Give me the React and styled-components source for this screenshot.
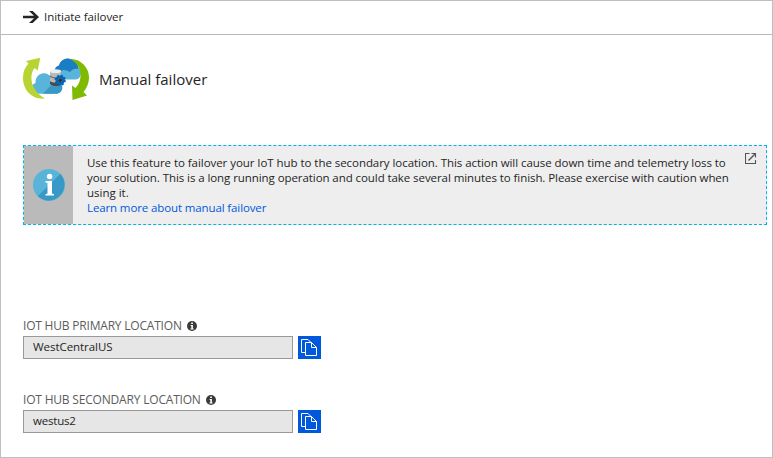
import React from "react";
import styled, { createGlobalStyle } from "styled-components";

const GlobalStyle = createGlobalStyle`
  * { box-sizing: border-box; }
  body { margin: 0; background: #fff; }
`;

const Blade = styled.main`
  display: flex;
  flex-direction: column;
  width: 773px;
  height: 458px;
  overflow: hidden;
  border: 1px solid #bfbfbf;
  background: #fff;
  color: #252525;
  font: 11.5px/15px "Open Sans", "Noto Sans", sans-serif;
  white-space: nowrap;
`;

const Toolbar = styled.header`
  display: flex;
  flex: none;
  height: 34px;
  padding-left: 22px;
  border-bottom: 1px solid #b9b9b9;
`;

const Command = styled.button`
  display: flex;
  align-items: center;
  gap: 5px;
  padding: 0 0 2px;
  border: 0;
  background: none;
  color: inherit;
  font: inherit;
  letter-spacing: ${(p) => p.$tracking};
`;

const Content = styled.div`
  display: flex;
  flex-direction: column;
  padding: 20px 5px 0 22px;
`;

const TitleRow = styled.div`
  display: flex;
  align-items: center;
  gap: 8px;
  height: 50px;
`;

const Title = styled.h1`
  margin: 0 0 2px;
  font-size: 15px;
  line-height: 20px;
  font-weight: 400;
  letter-spacing: ${(p) => p.$tracking};
`;

const Notice = styled.section`
  display: flex;
  height: 80px;
  margin-top: 40px;
  border: 1px dashed #00b4f0;
  background: #eee;
`;

const NoticeIcon = styled.div`
  display: flex;
  flex: none;
  align-items: center;
  justify-content: center;
  width: 49px;
  background: #bababa;
`;

const NoticeBody = styled.div`
  display: flex;
  flex: 1;
  min-width: 0;
  flex-direction: column;
  align-items: flex-start;
  padding: 9px 0 0 14px;
`;

const Line = styled.span`
  letter-spacing: ${(p) => p.$tracking};
`;

const Link = styled.a`
  color: #0058dc;
  text-decoration: none;
  letter-spacing: ${(p) => p.$tracking};
`;

const OpenButton = styled.span`
  display: flex;
  flex: none;
  width: 12px;
  height: 12px;
  margin: 7px 9px 0 0;
`;

const Fields = styled.div`
  display: flex;
  flex-direction: column;
  gap: 32px;
  margin-top: 92px;
`;

const Field = styled.div`
  display: flex;
  flex-direction: column;
  gap: 3px;
`;

const Label = styled.label`
  display: flex;
  align-items: center;
  gap: 5px;
  height: 16px;
  color: #5c5c5c;
  font-size: 12px;
`;

const LabelText = styled.span`
  letter-spacing: ${(p) => p.$tracking};
`;

const InfoSlot = styled.span`
  display: flex;
  padding-top: 2px;
`;

const InputRow = styled.div`
  display: flex;
  gap: 5px;
  height: 23px;
`;

const Value = styled.div`
  width: 270px;
  padding: 2px 9px 0;
  border: 1px solid #999;
  background: #e6e6e6;
  letter-spacing: ${(p) => p.$tracking};
`;

const CopyButton = styled.button`
  display: flex;
  width: 23px;
  height: 23px;
  padding: 0;
  border: 0;
  background: #0058dc;
`;

const ArrowIcon = () => (
  <svg width="16" height="14" viewBox="0 0 16 14" fill="#252525">
    <path d="M0 5.800H11L6 1H9.700L16 7L9.700 13H6L11 8.200H0Z" />
  </svg>
);

const CloudsIcon = () => (
  <svg width="68" height="50" viewBox="0 0 68 50">
    <path d="M34 24.500C29 20 31 13 36 11.500C37 4 46 1.500 51 6C54 8 55.500 10 55.500 13C60 16 58 24 53 24.500Z" fill="#59b4d9" />
    <path d="M31.500 16C32 12 34 11 36 10.500C38 3.500 46 1.500 51 6C54 8 55.500 11 55.500 14C52 13 49 14 47 17C43 15 40 14 38 16Z" fill="#1b7dc2" />
    <path d="M14 38.800C7 38.500 7 29.500 12.500 28C12 20 20 15.500 26 20C29 22 31 24 31.500 26.500C40 25 42.500 37 34 38.800Z" fill="#59b4d9" />
    <path d="M20 38.800L31.500 26.500C40 25 42.500 37 34 38.800Z" fill="#3999c6" />
    <path d="M27 16V29C27 32 38 32 38 29V16Z" fill="#b8babc" />
    <path d="M27 26C29 28 36 28 38 26V29C37 32 29 32 27 29Z" fill="#4b4b4d" />
    <path d="M27 21C29 23.500 36 23.500 38 21" fill="none" stroke="#777" strokeWidth="1.300" />
    <ellipse cx="32.500" cy="16.200" rx="5.500" ry="1.900" fill="#eee" />
    <circle cx="37.200" cy="25.200" r="3.400" fill="none" stroke="#0067b8" strokeWidth="2.800" />
    <circle cx="37.200" cy="25.200" r="4.800" fill="none" stroke="#0067b8" strokeWidth="1.800" strokeDasharray="1.885 1.885" />
    <circle cx="37.200" cy="25.200" r="2" fill="#34343c" />
    <path d="M22 43.500C9 45 0 35 0 23C0 17 2 12 5.500 8.500L3 6L17.300 2.700L14.700 15.500L11.500 13C6 20 7 35 22 43.500Z" fill="#b8d432" />
    <path d="M47 4C58 3.500 66 13 66 22C66 29 63 34 60.500 37L64 40.500L49.500 45L49 30.500L52.500 33C60 26 60 10 47 4Z" fill="#7fba00" />
  </svg>
);

const InfoBadge = () => (
  <svg width="32" height="32" viewBox="0 0 32 32">
    <circle cx="16" cy="16" r="16" fill="#59b4d9" />
    <path d="M4.700 27.300A16 16 0 0 0 27.300 4.700Z" fill="#3999c6" />
    <circle cx="16.600" cy="7.500" r="2.700" fill="#fff" />
    <path d="M12.500 12H19V24.500L21 25.200V26.500H12.500V25.200L14.500 24.500V14L12.500 13.400Z" fill="#fff" />
  </svg>
);

const ExternalIcon = () => (
  <svg width="12" height="12" viewBox="0 0 12 12" fill="none" stroke="#555">
    <path d="M4.500 .5H.5V10.500H10.500V7M6.500 .5H10.500V4.500" strokeWidth="1.100" />
    <path d="M3.500 7.500L10 1" strokeWidth="1.400" />
  </svg>
);

const InfoDot = () => (
  <svg width="10" height="10" viewBox="0 0 10 10">
    <circle cx="5" cy="5" r="5" fill="#3b3b3b" />
    <path d="M4.200 1.500H5.900V3H4.200ZM3.600 4H5.900V7.500H6.600V8.500H3.500V7.500H4.300V4.900H3.600Z" fill="#fff" />
  </svg>
);

const CopyIcon = () => (
  <svg width="23" height="23" viewBox="0 0 23 23" fill="none" stroke="#fff">
    <path d="M7 16.500H3.500V3.500H10L13 6.500" />
    <path d="M7.500 6.500H13.500L18.500 11.500V19.500H7.500Z" fill="#0058dc" />
    <path d="M13.500 6.500V11.500H18.500" />
  </svg>
);

const fields = [
  { label: "IOT HUB PRIMARY LOCATION", value: "WestCentralUS", labelTracking: "-0.2px", valueTracking: "-0.05px" },
  { label: "IOT HUB SECONDARY LOCATION", value: "westus2", labelTracking: "-0.19px", valueTracking: "-0.2px" },
];

export default function App() {
  return (
    <>
      <GlobalStyle />
      <Blade>
        <Toolbar>
          <Command $tracking="-0.05px"><ArrowIcon />Initiate failover</Command>
        </Toolbar>
        <Content>
          <TitleRow>
            <CloudsIcon />
            <Title $tracking="0px">Manual failover</Title>
          </TitleRow>
          <Notice>
            <NoticeIcon><InfoBadge /></NoticeIcon>
            <NoticeBody>
              <Line $tracking="-0.053px">Use this feature to failover your IoT hub to the secondary location. This action will cause down time and telemetry loss to</Line>
              <Line $tracking="-0.073px">your solution. This is a long running operation and could take several minutes to finish. Please exercise with caution when</Line>
              <Line $tracking="0px">using it.</Line>
              <Link $tracking="-0.12px">Learn more about manual failover</Link>
            </NoticeBody>
            <OpenButton><ExternalIcon /></OpenButton>
          </Notice>
          <Fields>
            {fields.map((f) => (
              <Field key={f.label}>
                <Label><LabelText $tracking={f.labelTracking}>{f.label}</LabelText><InfoSlot><InfoDot /></InfoSlot></Label>
                <InputRow>
                  <Value $tracking={f.valueTracking}>{f.value}</Value>
                  <CopyButton aria-label="Copy"><CopyIcon /></CopyButton>
                </InputRow>
              </Field>
            ))}
          </Fields>
        </Content>
      </Blade>
    </>
  );
}
